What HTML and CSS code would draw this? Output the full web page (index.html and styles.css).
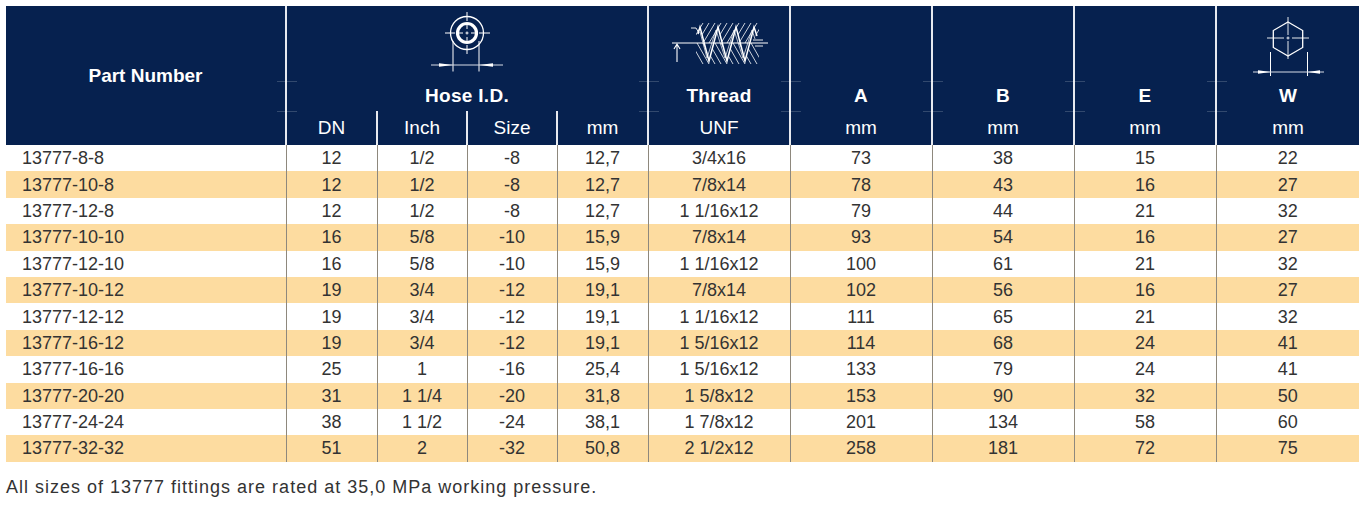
FILE: index.html
```html
<!DOCTYPE html>
<html lang="en">
<head>
<meta charset="utf-8">
<title>13777 fittings</title>
<link rel="stylesheet" href="styles.css">
</head>
<body>
<table class="spec">
  <colgroup>
    <col class="c-part"><col class="c-dn"><col class="c-inch"><col class="c-size"><col class="c-mm">
    <col class="c-thr"><col class="c-dim"><col class="c-dim"><col class="c-dim"><col class="c-w">
  </colgroup>
  <thead>
    <tr class="r-icon">
      <th rowspan="3" class="part-head">Part Number</th>
      <th colspan="4" class="sep">
        <svg class="ico" viewBox="0 0 100 75" width="100" height="75" aria-hidden="true">
          <g fill="none" stroke="#fff">
            <circle cx="50" cy="27" r="16.5" stroke-width="1.3"/>
            <circle cx="50" cy="27" r="9.5" stroke-width="3.2"/>
            <path d="M28 27H38M41.5 27H46M54 27H58.5M62 27H73M50 6V15M50 18.5V23M50 31V35.5M50 39V48" stroke-width="1"/>
            <path d="M48.5 27H51.5M50 25.5V28.5" stroke-width="1"/>
            <path d="M36 35V65.5M62 35V65.5" stroke-width="1"/>
            <path d="M14 59H86" stroke="#d7dde7" stroke-width="1"/>
          </g>
          <g fill="#fff">
            <polygon points="22,57.2 36,59 22,60.8"/>
            <polygon points="76,57.2 62,59 76,60.8"/>
          </g>
        </svg>
      </th>
      <th class="sep">
        <svg class="ico" viewBox="0 0 100 75" width="100" height="75" aria-hidden="true">
          <defs>
            <clipPath id="thrTop"><polygon points="27,14 90,14 90,37 88,37 85,21 76,55 67,21 58,55 49,21 40,55 31,21 27,37"/></clipPath>
            <clipPath id="thrBot"><polygon points="27,37 31,21 40,55 49,21 58,55 67,21 76,55 85,21 90,37 90,60 27,60"/></clipPath>
          </defs>
          <g stroke="#fff" fill="none" stroke-width="0.8" clip-path="url(#thrTop)">
            <path d="M22 37L34 17M28 37L40 17M34 37L46 17M40 37L52 17M46 37L58 17M52 37L64 17M58 37L70 17M64 37L76 17M70 37L82 17M76 37L88 17M82 37L94 17"/>
          </g>
          <g stroke="#fff" fill="none" stroke-width="0.8" clip-path="url(#thrBot)">
            <path d="M22 37L34 58M28 37L40 58M34 37L46 58M40 37L52 58M46 37L58 58M52 37L64 58M58 37L70 58M64 37L76 58M70 37L82 58M76 37L88 58M82 37L94 58"/>
          </g>
          <g stroke="#fff" fill="none">
            <polyline points="29,28 31,21 40,55 49,21 58,55 67,21 76,55 85,21 88,30" stroke-width="1.5"/>
            <polyline points="31,26 38,52 47,24 56,52 65,24 74,52 83,24 86,33" stroke-width="0.7"/>
            <path d="M22 22H27L30 27" stroke-width="0.9"/>
            <path d="M84 34H94M86 40H94" stroke-width="0.9"/>
            <path d="M3 37H99" stroke-width="1.1"/>
            <path d="M8 38V56M5 43L8 38L11 43" stroke-width="1.1"/>
          </g>
        </svg>
      </th>
      <th class="sep"></th>
      <th class="sep"></th>
      <th class="sep"></th>
      <th class="sep">
        <svg class="ico" viewBox="0 0 100 75" width="100" height="75" aria-hidden="true">
          <g fill="none" stroke="#fff">
            <polygon points="50,16 64.7,24.5 64.7,41.5 50,50 35.3,41.5 35.3,24.5" stroke-width="1.3"/>
            <path d="M29 32H46M48.5 32H51.5M54 32H71M50 11V29M50 30.5V33.5M50 35V53" stroke-width="0.9"/>
            <path d="M32.5 46V70M69.5 46V70" stroke-width="1"/>
            <path d="M15 66H86" stroke="#d7dde7" stroke-width="1"/>
          </g>
          <g fill="#fff">
            <polygon points="20,64.3 32.5,66 20,67.7"/>
            <polygon points="82,64.3 69.5,66 82,67.7"/>
          </g>
        </svg>
      </th>
    </tr>
    <tr class="r-title">
      <th colspan="4" class="sep tick">Hose I.D.</th>
      <th class="sep tick">Thread</th>
      <th class="sep tick">A</th>
      <th class="sep tick">B</th>
      <th class="sep tick">E</th>
      <th class="sep tick">W</th>
    </tr>
    <tr class="r-unit">
      <th class="sep tick">DN</th>
      <th class="sep">Inch</th>
      <th class="sep">Size</th>
      <th class="sep">mm</th>
      <th class="sep tick">UNF</th>
      <th class="sep tick">mm</th>
      <th class="sep tick">mm</th>
      <th class="sep tick">mm</th>
      <th class="sep tick">mm</th>
    </tr>
  </thead>
  <tbody>
    <tr><td class="pn">13777-8-8</td><td>12</td><td>1/2</td><td>-8</td><td>12,7</td><td>3/4x16</td><td>73</td><td>38</td><td>15</td><td>22</td></tr>
    <tr><td class="pn">13777-10-8</td><td>12</td><td>1/2</td><td>-8</td><td>12,7</td><td>7/8x14</td><td>78</td><td>43</td><td>16</td><td>27</td></tr>
    <tr><td class="pn">13777-12-8</td><td>12</td><td>1/2</td><td>-8</td><td>12,7</td><td>1 1/16x12</td><td>79</td><td>44</td><td>21</td><td>32</td></tr>
    <tr><td class="pn">13777-10-10</td><td>16</td><td>5/8</td><td>-10</td><td>15,9</td><td>7/8x14</td><td>93</td><td>54</td><td>16</td><td>27</td></tr>
    <tr><td class="pn">13777-12-10</td><td>16</td><td>5/8</td><td>-10</td><td>15,9</td><td>1 1/16x12</td><td>100</td><td>61</td><td>21</td><td>32</td></tr>
    <tr><td class="pn">13777-10-12</td><td>19</td><td>3/4</td><td>-12</td><td>19,1</td><td>7/8x14</td><td>102</td><td>56</td><td>16</td><td>27</td></tr>
    <tr><td class="pn">13777-12-12</td><td>19</td><td>3/4</td><td>-12</td><td>19,1</td><td>1 1/16x12</td><td>111</td><td>65</td><td>21</td><td>32</td></tr>
    <tr><td class="pn">13777-16-12</td><td>19</td><td>3/4</td><td>-12</td><td>19,1</td><td>1 5/16x12</td><td>114</td><td>68</td><td>24</td><td>41</td></tr>
    <tr><td class="pn">13777-16-16</td><td>25</td><td>1</td><td>-16</td><td>25,4</td><td>1 5/16x12</td><td>133</td><td>79</td><td>24</td><td>41</td></tr>
    <tr><td class="pn">13777-20-20</td><td>31</td><td>1 1/4</td><td>-20</td><td>31,8</td><td>1 5/8x12</td><td>153</td><td>90</td><td>32</td><td>50</td></tr>
    <tr><td class="pn">13777-24-24</td><td>38</td><td>1 1/2</td><td>-24</td><td>38,1</td><td>1 7/8x12</td><td>201</td><td>134</td><td>58</td><td>60</td></tr>
    <tr><td class="pn">13777-32-32</td><td>51</td><td>2</td><td>-32</td><td>50,8</td><td>2 1/2x12</td><td>258</td><td>181</td><td>72</td><td>75</td></tr>
  </tbody>
</table>
<p class="note">All sizes of 13777 fittings are rated at 35,0 MPa working pressure.</p>
</body>
</html>
```

FILE: styles.css
```css
* { box-sizing: border-box; }

body {
  margin: 6px;
  background: #ffffff;
  color: #333333;
  font-family: "Liberation Sans", Arial, sans-serif;
}

.spec {
  border-collapse: collapse;
  table-layout: fixed;
  width: 1353px;
}

.c-part { width: 280px; }
.c-dn { width: 91px; }
.c-inch { width: 90px; }
.c-size { width: 90px; }
.c-mm { width: 91px; }
.c-thr { width: 142px; }
.c-dim { width: 142px; }
.c-w { width: 143px; }

.spec thead th {
  background: #06214f;
  color: #ffffff;
  padding: 0;
  text-align: center;
  vertical-align: middle;
  font-size: 19px;
}

.spec thead th.sep {
  border-left: 2px solid #e6e9ef;
}

.part-head {
  font-weight: bold;
}

.r-icon th {
  height: 75px;
  vertical-align: top;
}

.r-title th {
  height: 30px;
  padding-bottom: 1px;
  line-height: 22px;
  vertical-align: bottom;
  font-weight: bold;
  letter-spacing: 0.3px;
}

.r-unit th {
  height: 34px;
  font-size: 20px;
  font-weight: normal;
  color: #dde2ea;
}

.spec thead th.tick {
  position: relative;
}

.spec thead th.tick::before {
  content: "";
  position: absolute;
  left: -10px;
  top: 0;
  width: 20px;
  height: 1px;
  background: rgba(255, 255, 255, 0.18);
}

.ico {
  display: block;
  margin: 0 auto;
}

.spec tbody td {
  height: 26.4px;
  padding: 0;
  font-size: 18px;
  line-height: 20px;
  text-align: center;
  color: #333333;
  border-left: 1px solid #8e887d;
}

.spec tbody td.pn {
  text-align: left;
  padding-left: 16px;
  border-left: none;
}

.spec tbody tr:nth-child(even) td {
  background: #fddca0;
}

.note {
  margin: 15px 0 0;
  font-size: 18px;
  line-height: 20px;
  letter-spacing: 1px;
  color: #333333;
}
```
